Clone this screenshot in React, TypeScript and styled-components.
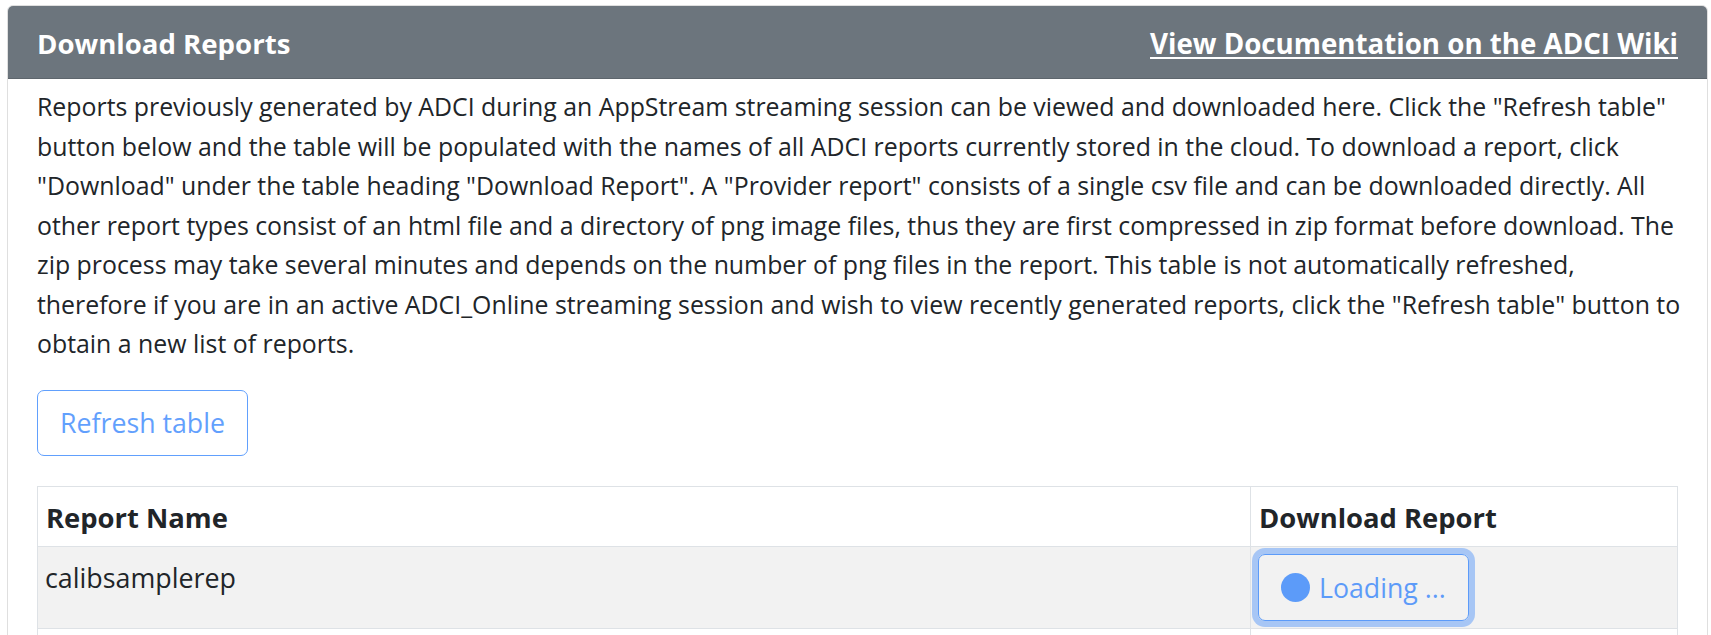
import React from "react";
import styled, { createGlobalStyle } from "styled-components";

const GlobalStyle = createGlobalStyle`
  html, body { margin: 0; padding: 0; background: #ffffff; }
  body {
    font-family: "Open Sans", "Noto Sans", Arial, sans-serif;
    color: #212529;
  }
  * { box-sizing: border-box; }
`;

const Page = styled.div`
  padding: 5px 3px 0 7px;
  height: 635px;
  overflow: hidden;
`;

const Card = styled.section`
  border: 1px solid #dfdfdf;
  border-radius: 6px;
  background: #ffffff;
`;

const CardHeader = styled.header`
  display: flex;
  align-items: center;
  justify-content: space-between;
  height: 73px;
  padding: 4px 29px 0 29px;
  background: #6c757d;
  border-radius: 5px 5px 0 0;
  border-bottom: 1px solid rgba(0, 0, 0, 0.125);
`;

const Title = styled.h2`
  margin: 0;
  font-size: 27.6px;
  font-weight: 700;
  color: #ffffff;
  line-height: 1.2;
`;

const WikiLink = styled.a`
  font-size: 27.7px;
  font-weight: 700;
  color: #ffffff;
  text-decoration: underline;
  text-decoration-thickness: 2px;
  text-underline-offset: 3px;
  line-height: 1.2;
`;

const CardBody = styled.div`
  padding: 8px 29px 0 29px;
`;

const Paragraph = styled.p`
  margin: 0 0 26px 0;
  font-size: 24.86px;
  line-height: 39.5px;
`;

const Line = styled.span`
  display: block;
  white-space: nowrap;
`;

const OutlineButton = styled.button<{ $focused?: boolean }>`
  display: inline-flex;
  align-items: center;
  gap: 9px;
  height: ${(p) => (p.$focused ? "67px" : "66px")};
  padding: 0 22px;
  font-family: inherit;
  font-size: 26.73px;
  color: #0d6efd;
  background: transparent;
  border: 1px solid #0d6efd;
  border-radius: 7px;
  opacity: 0.65;
  box-shadow: ${(p) => (p.$focused ? "0 0 0 6px rgba(13, 110, 253, 0.5)" : "none")};
  cursor: default;
`;

const Spinner = styled.span`
  display: inline-block;
  width: 29px;
  height: 29px;
  border-radius: 50%;
  background: currentColor;
`;

const Table = styled.table`
  margin-top: 30px;
  width: 100%;
  border-collapse: collapse;
  border: 1px solid #dee2e6;
`;

const HeadCell = styled.th<{ $w?: string }>`
  width: ${(p) => p.$w || "auto"};
  padding: 10px 8px 7px 8px;
  border: 1px solid #dee2e6;
  text-align: left;
  font-size: 27.4px;
  font-weight: 700;
  line-height: 42px;
  color: #212529;
`;

const BodyRow = styled.tr<{ $striped?: boolean }>`
  background: ${(p) => (p.$striped ? "#f2f2f2" : "#ffffff")};
`;

const Cell = styled.td`
  height: 60px;
  padding: 7px 8px 7px 7px;
  border: 1px solid #dee2e6;
  vertical-align: top;
  font-size: 26.84px;
  line-height: 47px;
`;

const lines = [
  'Reports previously generated by ADCI during an AppStream streaming session can be viewed and downloaded here. Click the "Refresh table"',
  'button below and the table will be populated with the names of all ADCI reports currently stored in the cloud. To download a report, click',
  '"Download" under the table heading "Download Report". A "Provider report" consists of a single csv file and can be downloaded directly. All',
  'other report types consist of an html file and a directory of png image files, thus they are first compressed in zip format before download. The',
  'zip process may take several minutes and depends on the number of png files in the report. This table is not automatically refreshed,',
  'therefore if you are in an active ADCI_Online streaming session and wish to view recently generated reports, click the "Refresh table" button to',
  'obtain a new list of reports.',
];

export default function App() {
  return (
    <>
      <GlobalStyle />
      <Page>
        <Card>
          <CardHeader>
            <Title>Download Reports</Title>
            <WikiLink href="#">View Documentation on the ADCI Wiki</WikiLink>
          </CardHeader>
          <CardBody>
            <Paragraph>
              {lines.map((l, i) => (
                <Line key={i}>{l}</Line>
              ))}
            </Paragraph>
            <OutlineButton>Refresh table</OutlineButton>
            <Table>
              <thead>
                <tr>
                  <HeadCell $w="1213px">Report Name</HeadCell>
                  <HeadCell>Download Report</HeadCell>
                </tr>
              </thead>
              <tbody>
                <BodyRow $striped>
                  <Cell>calibsamplerep</Cell>
                  <Cell>
                    <OutlineButton $focused>
                      <Spinner />
                      Loading ...
                    </OutlineButton>
                  </Cell>
                </BodyRow>
                <BodyRow>
                  <Cell />
                  <Cell />
                </BodyRow>
              </tbody>
            </Table>
          </CardBody>
        </Card>
      </Page>
    </>
  );
}
